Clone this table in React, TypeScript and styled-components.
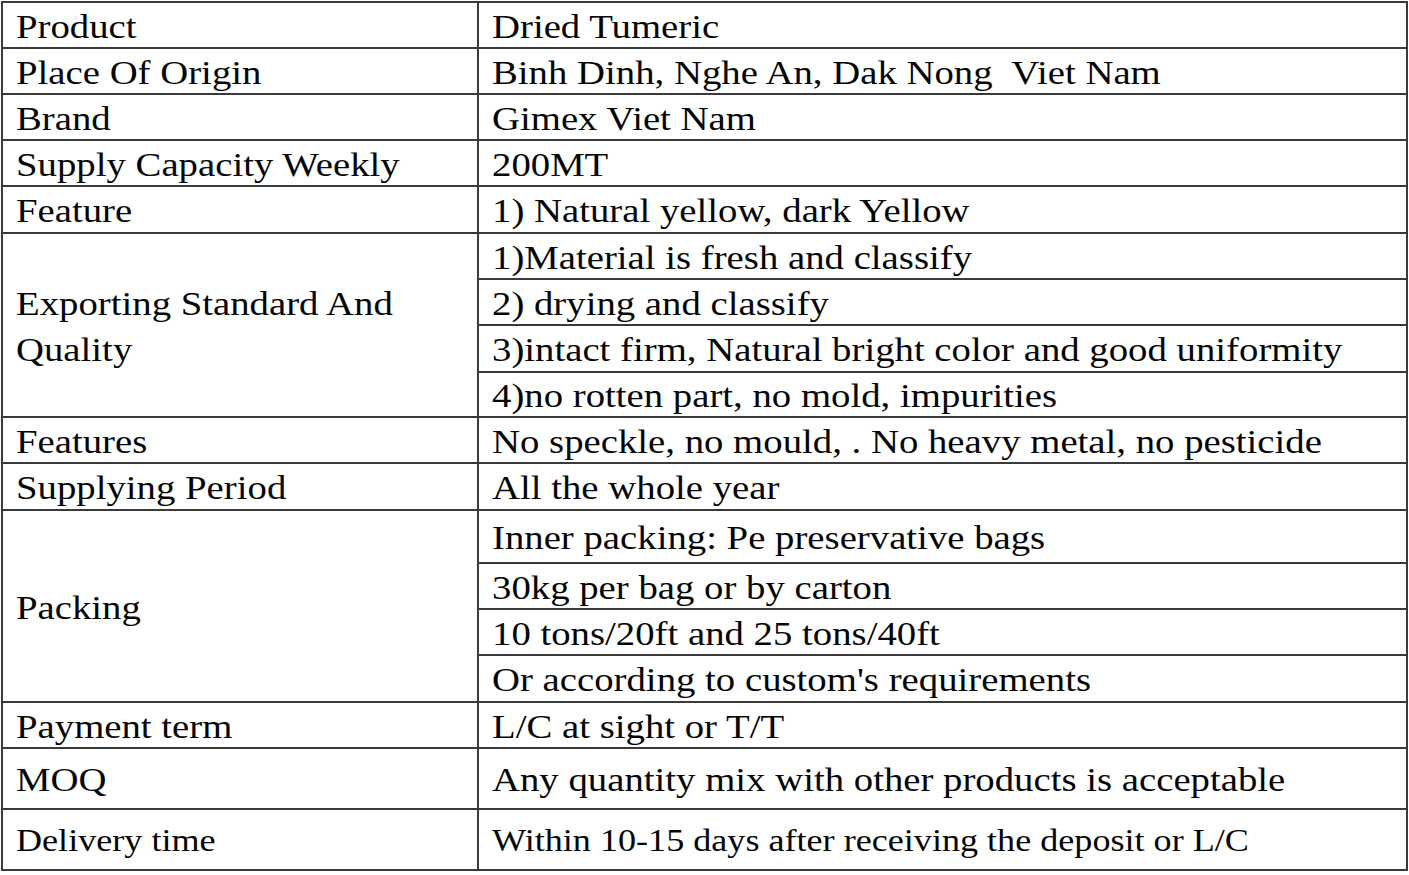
import React from "react";
import styled, { createGlobalStyle } from "styled-components";

const GlobalStyle = createGlobalStyle`
  body {
    margin: 0;
    background: #ffffff;
    font-family: "Liberation Serif", "Times New Roman", serif;
  }
`;

const Sheet = styled.div`
  padding: 1px 0 0 1px;
`;

const SpecTable = styled.table`
  border-collapse: collapse;
  table-layout: fixed;
  width: 1405px;
  color: #050505;
  font-size: 34px;
`;

const Row = styled.tr<{ $h: number; $size?: number }>`
  height: ${(p) => p.$h}px;
  font-size: ${(p) => p.$size ?? 34}px;
`;

const Cell = styled.td<{ $lh?: number }>`
  border: 2px solid #3a3a3a;
  padding: 3px 0 0 13px;
  vertical-align: middle;
  line-height: ${(p) => p.$lh ?? 38}px;
  white-space: pre;
  overflow: visible;
`;

const Text = styled.span`
  display: inline-block;
  transform: scaleX(1.14);
  transform-origin: left center;
`;

type Line = {
  label?: React.ReactNode;
  span?: number;
  value: string;
  h: number;
  size?: number;
  lh?: number;
};

const lines: Line[] = [
  { label: "Product", value: "Dried Tumeric", h: 46 },
  { label: "Place Of Origin", value: "Binh Dinh, Nghe An, Dak Nong  Viet Nam", h: 46 },
  { label: "Brand", value: "Gimex Viet Nam", h: 46 },
  { label: "Supply Capacity Weekly", value: "200MT", h: 46 },
  { label: "Feature", value: "1) Natural yellow, dark Yellow", h: 47 },
  {
    label: "Exporting Standard And\nQuality",
    span: 4,
    lh: 46,
    value: "1)Material is fresh and classify",
    h: 46,
  },
  { value: "2) drying and classify", h: 46 },
  { value: "3)intact firm, Natural bright color and good uniformity", h: 47 },
  { value: "4)no rotten part, no mold, impurities", h: 45 },
  { label: "Features", value: "No speckle, no mould, . No heavy metal, no pesticide", h: 46 },
  { label: "Supplying Period", value: "All the whole year", h: 47 },
  { label: "Packing", span: 4, value: "Inner packing: Pe preservative bags", h: 53 },
  { value: "30kg per bag or by carton", h: 46 },
  { value: "10 tons/20ft and 25 tons/40ft", h: 46 },
  { value: "Or according to custom's requirements", h: 47 },
  { label: "Payment term", value: "L/C at sight or T/T", h: 46 },
  { label: "MOQ", value: "Any quantity mix with other products is acceptable", h: 61 },
  {
    label: "Delivery time",
    value: "Within 10-15 days after receiving the deposit or L/C",
    h: 61,
    size: 31.7,
  },
];

const App = () => {
  return (
    <Sheet>
      <GlobalStyle />
      <SpecTable>
        <colgroup>
          <col style={{ width: 476 }} />
          <col style={{ width: 929 }} />
        </colgroup>
        <tbody>
          {lines.map((l, i) => (
            <Row key={i} $h={l.h} $size={l.size}>
              {l.label !== undefined && (
                <Cell rowSpan={l.span} $lh={l.lh}>
                  <Text>{l.label}</Text>
                </Cell>
              )}
              <Cell>
                <Text>{l.value}</Text>
              </Cell>
            </Row>
          ))}
        </tbody>
      </SpecTable>
    </Sheet>
  );
};

export default App;
